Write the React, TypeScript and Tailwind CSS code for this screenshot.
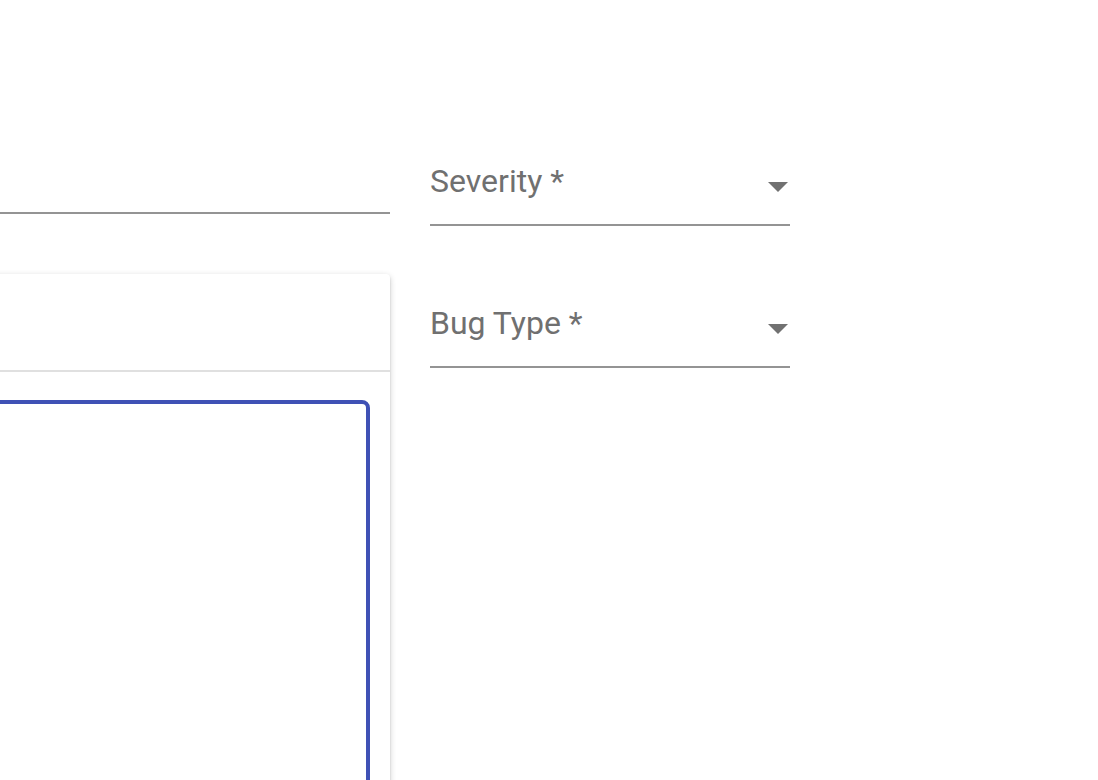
import React from "react";

const SelectField: React.FC<{ label: string; className?: string }> = ({ label, className }) => (
  <div className={`w-[360px] border-b-2 border-[#949494] pb-[27px] ${className ?? ""}`}>
    <div className="flex items-start justify-between">
      <span className="text-[32px] leading-[32px] text-[#707070]">{label}</span>
      <svg width="20" height="10" viewBox="0 0 20 10" className="mt-[17px] mr-[2px]">
        <path d="M0 0h20L10 10z" fill="#717171" />
      </svg>
    </div>
  </div>
);

export default function App() {
  return (
    <div
      className="h-[780px] w-[1098px] overflow-hidden bg-white"
      style={{ fontFamily: "Roboto, 'Liberation Sans', sans-serif" }}
    >
      <div className="flex gap-[40px] -ml-[300px]">
        {/* left column: text field + editor card */}
        <div className="w-[690px] shrink-0">
          <div className="mt-[212px] h-0 border-b-2 border-[#949494]" />
          <div className="mt-[60px] bg-white rounded-t-[4px] shadow-[0_2px_6px_rgba(0,0,0,0.2),0_2px_2px_rgba(0,0,0,0.14),0_4px_2px_-2px_rgba(0,0,0,0.12)]">
            <div className="h-[98px] border-b-2 border-[#e0e0e0]" />
            <div className="pt-[28px] pl-[20px] pr-[20px] pb-[40px]">
              <div className="h-[600px] rounded-lg border-4 border-[#3f51b5]" />
            </div>
          </div>
        </div>

        {/* right column: selects */}
        <div className="w-[360px] shrink-0 pt-[165px]">
          <SelectField label="Severity *" />
          <SelectField label="Bug Type *" className="mt-[81px]" />
        </div>
      </div>
    </div>
  );
}
